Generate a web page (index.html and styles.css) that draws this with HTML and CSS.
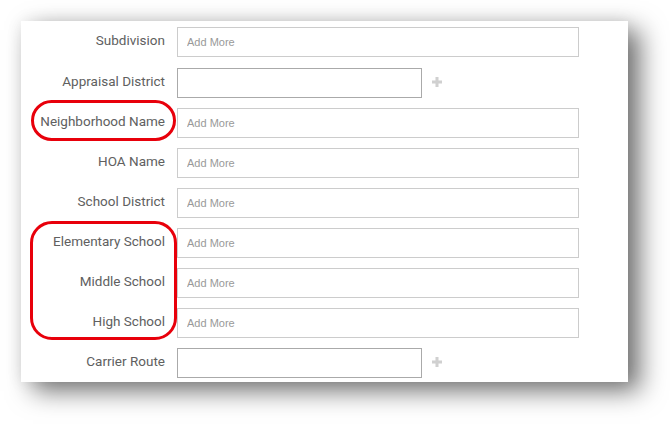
FILE: index.html
```html
<!DOCTYPE html>
<html lang="en">
<head>
    <meta charset="UTF-8">
    <meta name="viewport" content="width=device-width, initial-scale=1.0">
    <title>Property Details</title>
    <link rel="stylesheet" href="styles.css">
</head>
<body>
    <div class="card">
        <div class="row first">
            <label>Subdivision</label>
            <input type="text" placeholder="Add More">
        </div>
        <div class="row">
            <label>Appraisal District</label>
            <input type="text" class="short">
            <span class="plus"><svg width="10" height="10" viewBox="0 0 10 10"><rect x="3.5" y="0" width="3" height="10" fill="#d0d0d0"/><rect x="0" y="3.5" width="10" height="3" fill="#d0d0d0"/></svg></span>
        </div>
        <div class="row">
            <label>Neighborhood Name</label>
            <input type="text" placeholder="Add More">
        </div>
        <div class="row">
            <label>HOA Name</label>
            <input type="text" placeholder="Add More">
        </div>
        <div class="row">
            <label>School District</label>
            <input type="text" placeholder="Add More">
        </div>
        <div class="row">
            <label>Elementary School</label>
            <input type="text" placeholder="Add More">
        </div>
        <div class="row">
            <label>Middle School</label>
            <input type="text" placeholder="Add More">
        </div>
        <div class="row">
            <label>High School</label>
            <input type="text" placeholder="Add More">
        </div>
        <div class="row">
            <label>Carrier Route</label>
            <input type="text" class="short">
            <span class="plus"><svg width="10" height="10" viewBox="0 0 10 10"><rect x="3.5" y="0" width="3" height="10" fill="#d0d0d0"/><rect x="0" y="3.5" width="10" height="3" fill="#d0d0d0"/></svg></span>
        </div>

        <div class="mark mark-neighborhood"></div>
        <div class="mark mark-schools"></div>
    </div>
</body>
</html>
```

FILE: styles.css
```css
html, body {
    height: 100%;
}
body {
    margin: 0;
    padding: 21px 0 0 21px;
    box-sizing: border-box;
    background: #fff;
    font-family: Roboto, "Liberation Sans", sans-serif;
}
.card {
    position: relative;
    width: 607px;
    height: 361px;
    box-sizing: border-box;
    padding-top: 6px;
    background: #fff;
    box-shadow: 0 0 16px rgba(0, 0, 0, 0.07), 12px 9px 24px rgba(0, 0, 0, 0.55);
    display: flex;
    flex-direction: column;
    gap: 10px;
}
.row {
    display: flex;
    align-items: center;
    height: 30px;
}
.row.first {
    margin-bottom: 1px;
}
.row label {
    width: 144px;
    text-align: right;
    margin-right: 12px;
    font-size: 13.5px;
    color: #606060;
    padding-bottom: 4px;
}
input {
    width: 402px;
    height: 30px;
    box-sizing: border-box;
    border: 1px solid #ccc;
    padding: 0 9px;
    font-family: "Liberation Sans", Arial, sans-serif;
    font-size: 11px;
    color: #333;
    background: #fff;
    outline: none;
}
input::placeholder {
    color: #999;
}
input.short {
    width: 245px;
    border-color: #aaa;
}
.plus {
    display: flex;
    margin-left: 10px;
    padding-bottom: 2px;
}
.mark {
    position: absolute;
    border: 3px solid #e8000b;
    box-sizing: border-box;
}
.mark-neighborhood {
    left: 10px;
    top: 79px;
    width: 145px;
    height: 41px;
    border-radius: 21px;
}
.mark-schools {
    left: 9px;
    top: 200px;
    width: 147px;
    height: 119px;
    border-radius: 22px;
}
```
